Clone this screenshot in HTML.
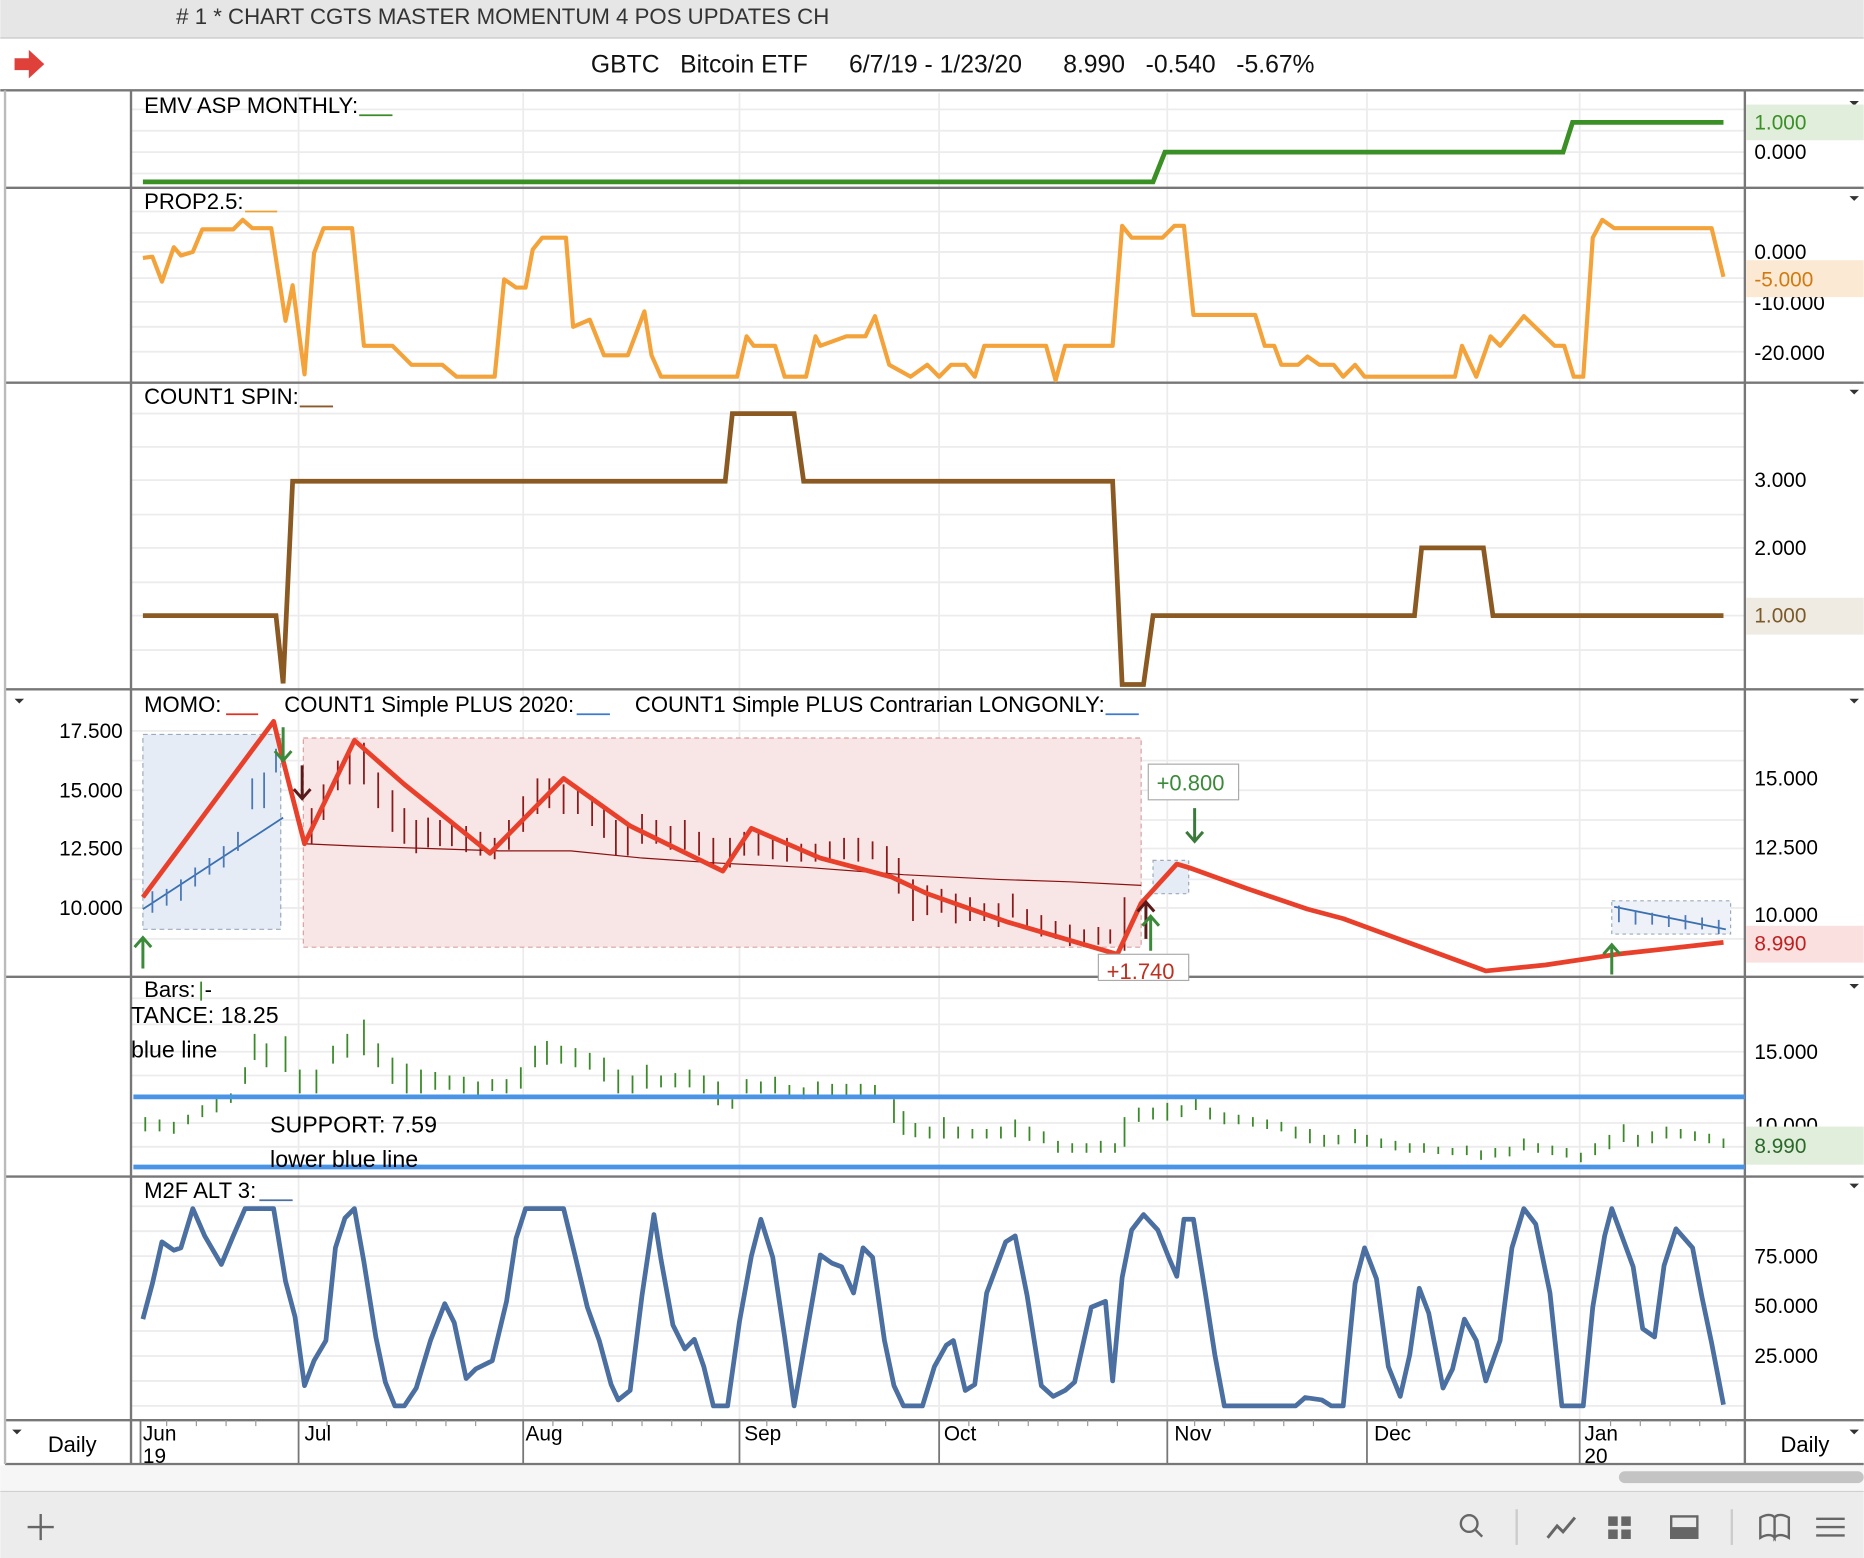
<!DOCTYPE html>
<html><head><meta charset="utf-8"><style>
html,body{margin:0;padding:0;background:#fff;}
svg{display:block;}
text{font-family:"Liberation Sans",Arial,sans-serif;}
</style></head><body>
<svg width="1864" height="1558" viewBox="0 0 1568 1311" xmlns="http://www.w3.org/2000/svg">
<rect width="1568" height="1311" fill="#fff"/>
<rect x="0" y="0" width="1568" height="32" fill="#e6e6e6"/>
<line x1="0" y1="32" x2="1568" y2="32" stroke="#c8c8c8"/>
<text x="148" y="20" font-size="18.7" fill="#333">#  1 * CHART CGTS MASTER MOMENTUM 4 POS UPDATES CH</text>
<path d="M12 49 H24 V42 L37 54 L24 66 V59 H12 Z" fill="#e0403a"/>
<text x="497" y="61" font-size="20.8" fill="#111" xml:space="preserve">GBTC   Bitcoin ETF      6/7/19 - 1/23/20      8.990   -0.540   -5.67%</text>
<line x1="0" y1="76" x2="1568" y2="76" stroke="#777" stroke-width="2"/>

<g stroke="#ececec" stroke-width="1.5">
<path d="M110 92H1468M110 110H1468M110 128H1468M110 146H1468"/>
<path d="M110 178H1468M110 196H1468M110 212H1468M110 234H1468M110 254H1468M110 275H1468M110 296H1468"/>
<path d="M110 348H1468M110 376H1468M110 404H1468M110 433H1468M110 461H1468M110 490H1468M110 518H1468M110 547H1468"/>
<path d="M110 615H1468M110 640H1468M110 665H1468M110 690H1468M110 714H1468M110 740H1468M110 764H1468M110 790H1468"/>
<path d="M110 840H1468M110 862H1468M110 885H1468M110 905H1468M110 945H1468M110 965H1468"/>
<path d="M110 1015H1468M110 1036H1468M110 1057H1468M110 1078H1468M110 1099H1468M110 1120H1468M110 1141H1468M110 1162H1468M110 1183H1468"/>
<path d="M251 78V1195M440 78V1195M622 78V1195M790 78V1195M982 78V1195M1150 78V1195M1329 78V1195"/>
</g>

<g stroke="#777" stroke-width="2" fill="none">
<line x1="110" y1="76" x2="110" y2="1232"/>
<line x1="1468" y1="76" x2="1468" y2="1232"/>
<line x1="4" y1="158" x2="1568" y2="158"/>
<line x1="4" y1="322" x2="1568" y2="322"/>
<line x1="4" y1="580" x2="1568" y2="580"/>
<line x1="4" y1="822" x2="1568" y2="822"/>
<line x1="4" y1="990" x2="1568" y2="990"/>
<line x1="4" y1="1195" x2="1568" y2="1195"/>
<line x1="4" y1="1232" x2="1568" y2="1232"/>
<line x1="4" y1="76" x2="4" y2="1232" stroke="#bbb"/>
</g>
<g fill="#333"><path d="M1556 85l4 4 4-4z M1556 165l4 4 4-4z M1556 328l4 4 4-4z M1556 588l4 4 4-4z M1556 828l4 4 4-4z M1556 996l4 4 4-4z M1556 1203l4 4 4-4z M12 588l4 4 4-4z M10 1203l4 4 4-4z"/></g>

<text x="121" y="95" font-size="18.6">EMV ASP MONTHLY:</text><line x1="302" y1="97" x2="330" y2="97" stroke="#3a8a2a" stroke-width="1.5"/>
<polyline points="120,153 970,153 980,128 1315,128 1323,103 1450,103" fill="none" stroke="#3a8f25" stroke-width="4"/>
<rect x="1469" y="88" width="99" height="30" fill="#e0eedb"/>
<text x="1476" y="109" font-size="17.5" fill="#3a8f25">1.000</text>
<text x="1476" y="134" font-size="17.5">0.000</text>

<text x="121" y="176" font-size="18.6">PROP2.5:</text><line x1="206" y1="178" x2="233" y2="178" stroke="#f0a030" stroke-width="1.5"/>
<polyline fill="none" stroke="#f4a23a" stroke-width="3.5" stroke-linejoin="round" points="120,217 128,216 136,237 146,208 152,215 162,212 170,193 196,193 204,185 212,192 228,192 240,270 246,240 256,315 264,213 272,192 296,192 306,291 330,291 346,307 372,307 384,317 416,317 424,235 434,242 442,242 448,210 456,200 476,200 482,275 496,269 508,299 528,299 542,262 548,299 556,317 620,317 628,283 634,291 652,291 660,317 678,317 686,283 690,291 712,283 728,283 736,266 748,307 766,317 780,307 790,317 800,307 812,307 820,317 828,291 880,291 888,320 896,291 936,291 944,190 952,200 978,200 988,190 996,190 1004,265 1056,265 1064,291 1072,291 1078,307 1092,307 1100,300 1110,307 1122,307 1130,317 1140,307 1148,317 1224,317 1230,291 1242,317 1254,283 1262,291 1282,266 1308,291 1316,291 1324,317 1332,317 1340,200 1348,185 1358,192 1440,192 1450,233"/>
<text x="1476" y="218" font-size="17.5">0.000</text>
<text x="1476" y="261" font-size="17.5">-10.000</text>
<rect x="1469" y="219" width="99" height="31" fill="#fbe9d4"/>
<text x="1476" y="241" font-size="17.5" fill="#d07a10">-5.000</text>
<text x="1476" y="303" font-size="17.5">-20.000</text>

<text x="121" y="340" font-size="18.6">COUNT1 SPIN:</text><line x1="252" y1="342" x2="280" y2="342" stroke="#8b5a2b" stroke-width="1.5"/>
<polyline fill="none" stroke="#8b5a22" stroke-width="4" points="120,518 232,518 238,575 246,405 610,405 616,348 668,348 676,405 936,405 944,576 962,576 970,518 1190,518 1196,461 1248,461 1256,518 1450,518"/>
<text x="1476" y="410" font-size="17.5">3.000</text>
<text x="1476" y="467" font-size="17.5">2.000</text>
<rect x="1469" y="503" width="99" height="31" fill="#f0ebe2"/>
<text x="1476" y="524" font-size="17.5" fill="#7a5a2a">1.000</text>

<text x="121" y="599" font-size="18.6">MOMO:</text><line x1="190" y1="601" x2="217" y2="601" stroke="#e03020" stroke-width="1.5"/>
<text x="239" y="599" font-size="18.6">COUNT1 Simple PLUS 2020:</text><line x1="485" y1="601" x2="513" y2="601" stroke="#3a7ad0" stroke-width="1.5"/>
<text x="534" y="599" font-size="18.6">COUNT1 Simple PLUS Contrarian LONGONLY:</text><line x1="930" y1="601" x2="958" y2="601" stroke="#3a7ad0" stroke-width="1.5"/>
<g font-size="17.5" text-anchor="end"><text x="103" y="621">17.500</text><text x="103" y="671">15.000</text><text x="103" y="720">12.500</text><text x="103" y="770">10.000</text></g>
<rect x="120" y="618" width="116" height="164" fill="#e6ecf6" stroke="#9ab" stroke-dasharray="4 3"/>
<rect x="255" y="621" width="705" height="176" fill="#f8e6e6" stroke="#d9a0a0" stroke-dasharray="4 3"/>
<rect x="970" y="724" width="30" height="28" fill="#e6ecf6" stroke="#9ab" stroke-dasharray="3 3"/>
<rect x="1356" y="758" width="100" height="28" fill="#eef2f8" stroke="#9ab" stroke-dasharray="3 3"/>
<path d="M120 765 L238 688" stroke="#3a70b0" stroke-width="1.5" fill="none"/>
<path d="M1358 763 L1452 782" stroke="#3a70b0" stroke-width="1.5" fill="none"/>
<g stroke="#4a78b8" stroke-width="1.5"><path d="M128 750v18M140 748v14M152 740v18M164 730v16M176 722v14M188 712v18M200 700v16M212 655v26M222 650v30M232 630v20"/>
<path d="M1362 762v14M1376 766v12M1390 768v10M1404 770v10M1418 770v12M1432 772v10M1446 774v12"/></g>
<g stroke="#8b1a1a" stroke-width="1.5"><path d="M262 680v30M272 660v30M284 640v25M294 630v30M306 625v35M318 650v30M330 665v35M340 680v30M350 690v28M360 688v25M370 690v22M380 692v20M392 695v22M404 700v20M416 705v18M428 690v25M440 670v30M452 655v30M462 655v25M474 660v25M486 665v20M498 670v25M508 680v25M518 690v30M528 695v25M540 685v25M552 690v20M564 695v20M576 690v25M588 700v20M600 705v25M614 705v25M626 700v20M638 700v20M650 705v18M662 705v20M674 710v15M686 710v15M698 708v15M710 705v18M722 705v20M734 708v15M746 712v25M756 722v30M768 740v35M780 745v25M792 748v20M804 752v25M816 755v20M828 760v15M840 760v20M852 752v20M864 765v15M876 770v18M888 775v15M900 778v18M912 782v15M924 780v15M934 782v12M946 755v45"/></g>
<polyline fill="none" stroke="#8b1010" stroke-width="1" points="256,710 300,712 360,714 420,716 480,716 540,722 600,726 680,730 760,736 840,740 900,742 960,745"/>
<polyline fill="none" stroke="#e8402a" stroke-width="4" stroke-linejoin="round" points="120,755 230,607 238,640 256,710 298,623 340,660 412,718 474,655 530,695 608,733 632,697 690,722 750,738 780,752 848,776 940,803 960,760 990,727 1000,730 1050,748 1100,765 1130,773 1190,795 1250,817 1300,812 1360,803 1450,793"/>
<g stroke-width="2.5" fill="none">
<path d="M120 815V790M113 797l7-8 7 8" stroke="#3a8a3a"/>
<path d="M238 612V640M231 632l7 8 7-8" stroke="#3a8a3a"/>
<path d="M254 644V672M247 664l7 8 7-8" stroke="#5a1a1a"/>
<path d="M1005 680V708M998 700l7 8 7-8" stroke="#3a7a3a"/>
<path d="M964 790V760M957 767l7-8 7 8" stroke="#5a1a1a"/>
<path d="M968 800V772M961 779l7-8 7 8" stroke="#3a8a3a"/>
<path d="M1356 820V796M1349 803l7-8 7 8" stroke="#3a8a3a"/>
</g>
<rect x="966" y="643" width="76" height="30" fill="#fff" stroke="#aaa"/>
<text x="973" y="665" font-size="18.5" fill="#3a8a3a">+0.800</text>
<rect x="924" y="803" width="76" height="22" fill="#fff" stroke="#aaa"/>
<text x="931" y="824" font-size="18.5" fill="#c03020">+1.740</text>
<g font-size="17.5"><text x="1476" y="661">15.000</text><text x="1476" y="719">12.500</text><text x="1476" y="776">10.000</text></g>
<rect x="1469" y="779" width="99" height="31" fill="#fbe0e0"/>
<text x="1476" y="800" font-size="17.5" fill="#c02020">8.990</text>

<g stroke="#3a8a2a" stroke-width="1.5"><path d="M122 940v12M134 942v10M146 944v10M158 938v8M170 930v10M182 924v12M194 920v8M206 898v14M214 870v22M224 878v20M240 872v30M252 900v20M266 900v20M280 880v15M292 870v20M306 858v30M318 878v20M330 890v22M342 895v25M354 900v20M366 902v15M378 905v12M390 906v14M402 910v12M414 908v10M426 908v12M438 898v18M450 880v18M460 876v20M472 880v15M484 882v16M496 886v14M508 890v20M520 900v20M532 905v15M544 896v20M556 905v10M568 903v12M580 900v15M592 905v15M604 910v20M616 925v8M628 908v12M640 910v10M652 906v14M664 913v10M676 915v10M688 910v12M700 912v12M712 912v12M724 912v10M736 913v10M752 925v20M760 935v20M770 945v12M782 948v10M794 940v18M806 948v10M818 950v8M830 950v8M842 948v10M854 942v15M866 948v12M878 952v10M890 960v10M902 962v8M914 962v8M926 960v10M938 962v8M946 940v25M958 932v12M970 932v10M982 928v15M994 930v10M1006 924v10M1018 932v10M1030 936v10M1042 938v8M1054 940v8M1066 942v8M1078 944v8M1090 948v10M1102 950v12M1114 955v10M1126 955v8M1140 950v12M1150 955v10M1162 958v8M1174 960v8M1186 962v8M1198 962v8M1210 965v6M1222 966v6M1234 964v8M1246 968v8M1258 966v8M1270 965v8M1282 958v10M1294 962v8M1306 964v8M1318 966v8M1330 970v8M1342 962v10M1354 955v12M1366 946v15M1378 955v10M1390 952v10M1402 948v10M1414 950v8M1426 952v8M1438 954v8M1450 958v8"/></g>
<g stroke="#4a94e8" stroke-width="4"><line x1="112" y1="923" x2="1468" y2="923"/><line x1="112" y1="982" x2="1468" y2="982"/></g>
<text x="121" y="839" font-size="18.6">Bars:</text><line x1="169" y1="826" x2="169" y2="842" stroke="#3a8a2a" stroke-width="1.5"/><text x="172" y="839" font-size="18.6">-</text>
<text x="110" y="861" font-size="19.5">TANCE: 18.25</text>
<text x="110" y="890" font-size="19.5">blue line</text>
<text x="227" y="953" font-size="19.5">SUPPORT: 7.59</text>
<text x="227" y="982" font-size="19.5">lower blue line</text>
<text x="1476" y="891" font-size="17.5">15.000</text>
<text x="1476" y="953" font-size="17.5">10.000</text>
<rect x="1469" y="948" width="99" height="32" fill="#e0eedb"/>
<text x="1476" y="970" font-size="17.5" fill="#2a6a2a">8.990</text>

<text x="121" y="1008" font-size="18.6">M2F ALT 3:</text><line x1="218" y1="1010" x2="246" y2="1010" stroke="#4a6fa0" stroke-width="1.5"/>
<polyline fill="none" stroke="#4a6fa0" stroke-width="4" stroke-linejoin="round" points="120,1110 128,1080 136,1045 146,1052 152,1050 162,1017 172,1040 186,1064 196,1040 206,1017 230,1017 240,1078 248,1108 256,1166 264,1145 274,1128 282,1050 290,1025 298,1017 306,1062 316,1125 324,1163 332,1183 340,1183 350,1168 362,1128 374,1097 382,1113 392,1160 400,1152 414,1145 426,1095 434,1042 442,1017 474,1017 484,1058 494,1100 504,1128 514,1165 520,1178 530,1170 540,1090 550,1022 556,1060 566,1115 576,1135 584,1127 592,1150 600,1183 612,1183 622,1112 632,1057 640,1026 650,1058 660,1125 668,1183 678,1125 690,1056 700,1063 708,1066 718,1088 726,1050 734,1058 744,1128 752,1166 760,1183 776,1183 786,1150 796,1132 802,1128 812,1170 820,1165 830,1088 846,1045 854,1040 864,1090 876,1166 886,1175 896,1170 904,1163 918,1100 930,1095 936,1162 944,1075 952,1035 962,1022 974,1035 984,1060 990,1074 996,1026 1004,1026 1014,1088 1022,1140 1030,1183 1090,1183 1098,1176 1112,1178 1120,1183 1130,1183 1140,1080 1148,1050 1158,1076 1168,1150 1178,1175 1186,1140 1194,1084 1202,1105 1214,1168 1222,1152 1232,1110 1242,1128 1250,1162 1262,1128 1272,1050 1282,1017 1292,1030 1304,1088 1314,1183 1332,1183 1340,1100 1350,1040 1356,1017 1374,1066 1382,1118 1392,1125 1400,1065 1410,1034 1424,1050 1432,1092 1440,1130 1450,1182"/>
<g font-size="17.5"><text x="1476" y="1063">75.000</text><text x="1476" y="1105">50.000</text><text x="1476" y="1147">25.000</text></g>

<g stroke="#777" stroke-width="1.5"><path d="M118 1195V1232M251 1195V1232M440 1195V1232M622 1195V1232M790 1195V1232M982 1195V1232M1150 1195V1232M1329 1195V1232"/></g>
<g stroke="#999" stroke-width="1"><path d="M140 1195v5M165 1195v5M190 1195v5M215 1195v5M275 1195v5M300 1195v5M325 1195v5M350 1195v5M375 1195v5M400 1195v5M465 1195v5M490 1195v5M515 1195v5M540 1195v5M565 1195v5M590 1195v5M645 1195v5M670 1195v5M695 1195v5M720 1195v5M745 1195v5M815 1195v5M840 1195v5M865 1195v5M890 1195v5M915 1195v5M940 1195v5M1005 1195v5M1030 1195v5M1055 1195v5M1080 1195v5M1105 1195v5M1175 1195v5M1200 1195v5M1225 1195v5M1250 1195v5M1275 1195v5M1300 1195v5M1355 1195v5M1380 1195v5M1405 1195v5M1430 1195v5M1452 1195v5"/></g>
<g font-size="17.5"><text x="120" y="1212">Jun</text><text x="120" y="1231">19</text><text x="256" y="1212">Jul</text><text x="442" y="1212">Aug</text><text x="626" y="1212">Sep</text><text x="794" y="1212">Oct</text><text x="988" y="1212">Nov</text><text x="1156" y="1212">Dec</text><text x="1333" y="1212">Jan</text><text x="1333" y="1231">20</text>
<text x="40" y="1222" font-size="18.5">Daily</text><text x="1498" y="1222" font-size="18.5">Daily</text></g>

<rect x="0" y="1233" width="1568" height="22" fill="#f6f6f6"/>
<rect x="1362" y="1238" width="206" height="10" rx="5" fill="#c4c4c4"/>
<rect x="0" y="1255" width="1568" height="56" fill="#ececec"/>
<line x1="0" y1="1255" x2="1568" y2="1255" stroke="#d0d0d0"/>
<g stroke="#666" stroke-width="2" fill="none">
<path d="M34 1274v22M23 1285h22"/>
<circle cx="1236" cy="1282" r="7"/><path d="M1241 1287l6 6"/>
<line x1="1276" y1="1270" x2="1276" y2="1300" stroke="#ccc"/>
<path d="M1302 1294l8-10 5 5 10-12" stroke-width="2.5"/>
<line x1="1457" y1="1270" x2="1457" y2="1300" stroke="#ccc"/>
<rect x="1406" y="1276" width="22" height="18"/>
<path d="M1481 1277c5-3 10-3 12 0v17c-2-3-7-3-12 0zM1493 1277c2-3 7-3 12 0v17c-5-3-10-3-12 0z"/>
<path d="M1528 1278h24M1528 1285h24M1528 1292h24"/>
</g>
<g fill="#666"><rect x="1353" y="1276" width="8" height="8"/><rect x="1364" y="1276" width="8" height="8"/><rect x="1353" y="1287" width="8" height="8"/><rect x="1364" y="1287" width="8" height="8"/><rect x="1406" y="1285" width="22" height="9"/></g>
</svg>
</body></html>
